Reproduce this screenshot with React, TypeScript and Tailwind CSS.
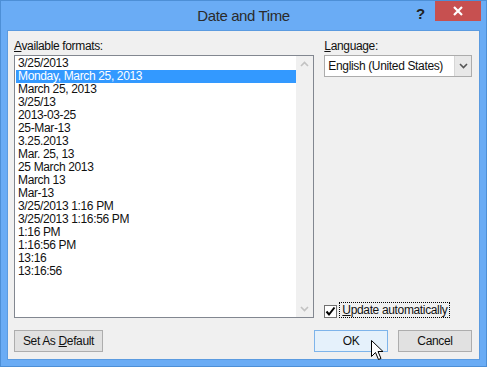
import React from 'react';

const FORMATS = [
    '3/25/2013',
    'Monday, March 25, 2013',
    'March 25, 2013',
    '3/25/13',
    '2013-03-25',
    '25-Mar-13',
    '3.25.2013',
    'Mar. 25, 13',
    '25 March 2013',
    'March 13',
    'Mar-13',
    '3/25/2013 1:16 PM',
    '3/25/2013 1:16:56 PM',
    '1:16 PM',
    '1:16:56 PM',
    '13:16',
    '13:16:56',
];

const SELECTED = 1;

const Chevron: React.FC<{ up?: boolean; className?: string }> = ({ up, className }) => (
    <svg width="9" height="6" viewBox="0 0 9 6" className={className}>
        <path
            d={up ? 'M1 5 L4.5 1.5 L8 5' : 'M1 1 L4.5 4.5 L8 1'}
            fill="none"
            stroke="currentColor"
            strokeWidth="1.6"
        />
    </svg>
);

export default function App() {
    return (
        <div
            className="relative w-[487px] h-[367px] bg-[#6aacf5] border border-[#4d8fd6] flex flex-col text-[12px] tracking-[-0.35px] text-[#111]"
            style={{ fontFamily: '"Liberation Sans", Arial, sans-serif' }}
        >
            {/* Barra de título */}
            <div className="relative h-[29px] shrink-0 flex items-center justify-center">
                <span className="text-[15px] tracking-[-0.4px] text-[#2b2b2b] mt-[1px]">Date and Time</span>
                <span className="absolute left-[415px] top-[2px] text-[15px] font-bold text-[#222]">?</span>
                <div className="absolute left-[434px] top-0 w-[46px] h-[20px] bg-[#c75050] flex items-center justify-center">
                    <svg width="10" height="10" viewBox="0 0 10 10">
                        <path d="M1 1 L9 9 M9 1 L1 9" stroke="white" strokeWidth="2.2" />
                    </svg>
                </div>
            </div>

            {/* Área cliente */}
            <div className="ml-[6px] mr-[6px] mb-[6px] flex-1 bg-[#f0f0f0] border border-[#5b9be0] flex flex-col pl-[6px] pr-[7px] pt-[7px]">
                <div className="flex gap-[10px]">
                    {/* Formatos */}
                    <div className="w-[301px] flex flex-col">
                        <div className="h-[16px] leading-[16px] mb-[1px]">
                            <span className="underline">A</span>vailable formats:
                        </div>
                        <div className="h-[263px] border border-[#828790] bg-white flex">
                            <div className="flex-1 pl-[1px] pt-[1px]">
                                {FORMATS.map((f, i) => (
                                    <div
                                        key={f}
                                        className={
                                            i === SELECTED
                                                ? 'h-[13px] leading-[13px] pl-[2px] bg-[#3399ff] text-white'
                                                : 'h-[13px] leading-[13px] pl-[2px]'
                                        }
                                    >
                                        {f}
                                    </div>
                                ))}
                            </div>
                            <div className="w-[17px] bg-[#f0f0f0] flex flex-col items-center justify-between py-[5px] text-[#c2c2c2]">
                                <Chevron up />
                                <Chevron />
                            </div>
                        </div>
                    </div>

                    {/* Idioma */}
                    <div className="w-[148px] flex flex-col">
                        <div className="h-[16px] leading-[16px] mb-[1px]">
                            <span className="underline">L</span>anguage:
                        </div>
                        <div className="h-[22px] border border-[#acacac] bg-white flex">
                            <div className="flex-1 pl-[3px] leading-[20px]">English (United States)</div>
                            <div className="w-[17px] bg-[#e8e8e8] border-l border-[#d6d6d6] flex items-center justify-center text-[#555]">
                                <Chevron />
                            </div>
                        </div>
                        <div className="flex-1" />
                        <div className="flex items-center">
                            <div className="w-[13px] h-[13px] mt-[2px] border border-[#707070] bg-white flex items-center justify-center">
                                <svg width="11" height="11" viewBox="0 0 11 11">
                                    <path d="M1.5 5.5 L4 8.5 L9.5 1.5" fill="none" stroke="black" strokeWidth="2" />
                                </svg>
                            </div>
                            <div className="ml-[2px] h-[16px] leading-[15px] px-[2px] border border-dotted border-black">
                                <span className="underline">U</span>pdate automatically
                            </div>
                        </div>
                    </div>
                </div>

                {/* Botones */}
                <div className="mt-[12px] flex items-center">
                    <button className="w-[89px] h-[22px] bg-[#e1e1e1] border border-[#adadad]">
                        Set As <span className="underline">D</span>efault
                    </button>
                    <div className="flex-1" />
                    <button className="w-[74px] h-[22px] bg-[#e5f1fb] border border-[#7eb4ea]">OK</button>
                    <button className="ml-[10px] w-[74px] h-[22px] bg-[#e1e1e1] border border-[#adadad]">Cancel</button>
                </div>
            </div>

            {/* Puntero del ratón */}
            <svg className="absolute left-[370px] top-[339px]" width="13" height="21" viewBox="0 0 13 21">
                <path
                    d="M0.5 0.5 L0.5 16.5 L4.5 12.5 L7.5 19.5 L10 18.5 L7 11.5 L12 11.5 Z"
                    fill="white"
                    stroke="black"
                    strokeWidth="1"
                />
            </svg>
        </div>
    );
}
